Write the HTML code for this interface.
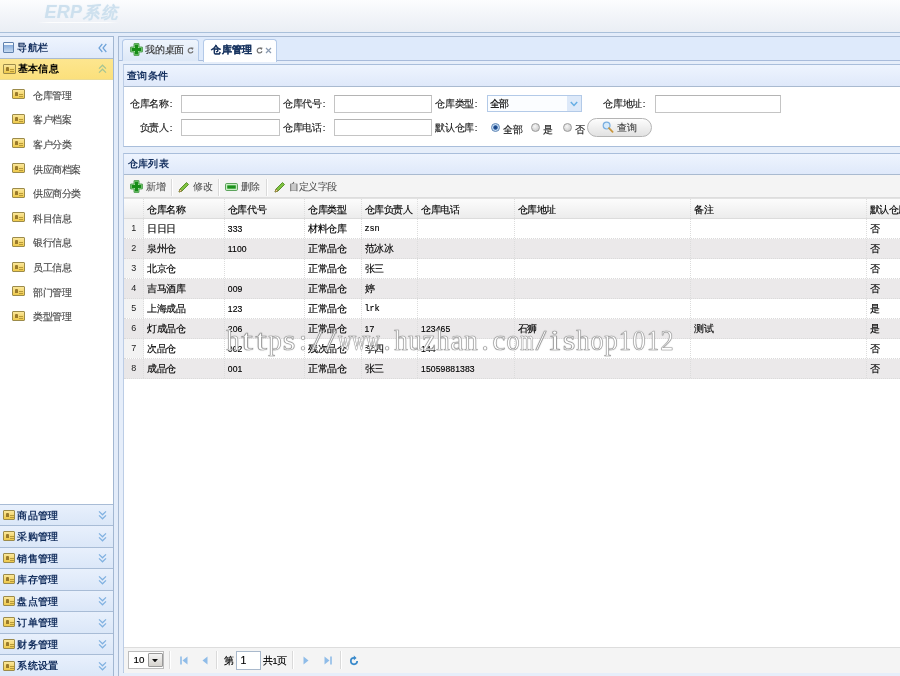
<!DOCTYPE html>
<html>
<head>
<meta charset="utf-8">
<title>ERP系统</title>
<style>
*{box-sizing:border-box;margin:0;padding:0}
html,body{width:900px;height:676px;overflow:hidden}
body{position:relative;background:#e3ecfa;font-family:"Liberation Sans",sans-serif;font-size:9.6px;letter-spacing:-.4px;color:#000;-webkit-text-stroke:.15px currentColor}
div,span,svg{position:absolute}
.nw{white-space:nowrap}
#north{left:0;top:0;width:900px;height:33px;background:linear-gradient(#fcfdfe 0,#f4f6fa 40%,#eaeef4 100%);border-bottom:1px solid #a9c0da}
#logo{-webkit-text-stroke:0;left:44.6px;top:-.6px;letter-spacing:.2px;font-size:18px;font-weight:bold;font-style:italic;color:#cde0ee;line-height:26px;text-shadow:0 0 1.5px #e3eef6}
#west{left:-1px;width:115px;height:641px;background:#fff;border:1px solid #a2b7d2}
.ph{-webkit-text-stroke:0;left:0;right:0;height:20.5px;background:linear-gradient(#eef4fe 0,#dfe9fa 100%);border-bottom:1px solid #a9bad0;font-weight:bold;color:#15305f;font-size:10px;letter-spacing:.3px;line-height:19.5px}
.acc{-webkit-text-stroke:0;left:0;width:113px;height:21.6px;background:linear-gradient(#e8f0fc 0,#dbe7f8 100%);border-top:1px solid #a8bcd6;font-weight:bold;color:#15305f;font-size:10px;letter-spacing:.3px;line-height:21px}
.t{left:17.3px;top:0}
.ico{left:3.2px;top:5.2px;width:12.3px;height:10px;background:linear-gradient(#fbe79a,#eec94b);border:1px solid #9c8b4a;border-radius:1px}
.ico:before{content:"";position:absolute;left:2px;top:2px;width:3px;height:4px;background:#9a7a2a;border-radius:1px 1px 0 0}
.ico:after{content:"";position:absolute;left:6px;top:4px;width:3.5px;height:1px;background:#b89a3a;box-shadow:0 2px 0 #b89a3a}
.item{left:0;width:113px;height:24.6px;line-height:24.6px;color:#4a4a4a}
.item .ico{left:12.4px;top:6.5px}
.item .tx{left:33px;top:1px}
#center{left:118px;top:36.4px;width:790px;height:641px;background:#deeafb;border:1px solid #a7b9d2}
.tab{top:39px;height:22px;border:1px solid #b3c9e8;border-bottom:none;border-radius:3.5px 3.5px 0 0;background:linear-gradient(#eff5fd,#dde8f7);line-height:20px;color:#333}
.panel{border:1px solid #a9bedb;border-left-color:#bccde6;background:#fff}
.lbl{line-height:17px;height:17px;color:#1a1a1a}
.inp{height:17.5px;background:#fff;border:1px solid #c4c4c4;border-top-color:#b4b4b4}
.radio{width:9.2px;height:9.2px;border-radius:50%;border:1px solid #9b9b9b;background:radial-gradient(circle at 40% 35%,#f6f6f6 0,#dedede 45%,#bfbfbf 100%)}
.row{left:0;width:790px;height:20px;border-bottom:1px dotted #dadada;line-height:19px}
.alt{background:#ebe9ea}
.row span{top:0.5px}
.hrow{left:0;width:790px;height:20.3px;background:linear-gradient(#fcfcfc,#ececec);border-top:1px solid #e2e2e2;border-bottom:1px solid #dcdcdc;line-height:19px}
.hrow span{top:0.3px}
.vl{top:0;width:0;border-left:1px dotted #dcdcdc}
.sep{width:2px;border-left:1px solid #dadada;border-right:1px solid #fff}
.tbt{line-height:16px;color:#505050;-webkit-text-stroke:.05px currentColor}
.wm{display:flex;width:448px;height:38px;font-family:"Liberation Serif",serif;font-size:29px;line-height:38px;letter-spacing:0;color:#fff;-webkit-text-stroke:.7px #9c9c9c;text-shadow:0 0 1.5px #b0b0b0}
.wm b{position:static;display:block;width:14px;flex:0 0 14px;text-align:center;font-weight:normal;overflow:visible;white-space:nowrap;display:flex;justify-content:center}
i.c{display:inline-block;width:4.8px;text-align:center;font-style:normal;letter-spacing:0}
</style>
</head>
<body>
<div id="wrap" style="left:0;top:0;width:900px;height:676px;will-change:transform;overflow:hidden">
<div id="north"><div id="logo" class="nw">ERP<i style="font-size:16.4px;letter-spacing:2.2px;margin-left:1px">系统</i></div><div style="left:37px;top:22.3px;width:82px;height:1px;background:linear-gradient(90deg,rgba(255,255,255,0),rgba(255,255,255,.9) 15%,rgba(255,255,255,.9) 85%,rgba(255,255,255,0))"></div></div>
<div id="west" style="top:36.2px">
<div class="ph nw" style="top:0;height:21.7px;line-height:20.4px"><div style="left:3.4px;top:5px;width:10.6px;height:10.8px;border:1px solid #5f80ad;border-radius:1px;background:linear-gradient(#f3f7fc 0,#f3f7fc 22%,#86abdb 23%,#c6daf1 100%)"></div><span class="t" style="top:.9px">导航栏</span><svg style="right:6px;top:6px" width="9" height="10" viewBox="0 0 9 10"><path d="M4.3 1 L1 5 L4.3 9 M8.3 1 L5 5 L8.3 9" fill="none" stroke="#6fa3d9" stroke-width="1.2"/></svg></div>
<div class="acc nw" style="top:21.7px;height:21.0px;background:linear-gradient(#fde68f,#fbe07c);border-top:none;border-bottom:1px solid #ebdc96;color:#000;line-height:20.4px"><div class="ico" style="left:3.4px;top:5.2px"></div><span class="t" style="left:17.7px;top:.6px">基本信息</span><svg style="right:6.5px;top:5.5px" width="9" height="10" viewBox="0 0 9 10"><path d="M1 4.6 L4.5 1.2 L8 4.6 M1 8.6 L4.5 5.2 L8 8.6" fill="none" stroke="#a5c493" stroke-width="1.2"/></svg></div>
<div class="item nw" style="top:45.50px"><div class="ico"></div><span class="tx">仓库管理</span></div>
<div class="item nw" style="top:70.12px"><div class="ico"></div><span class="tx">客户档案</span></div>
<div class="item nw" style="top:94.74px"><div class="ico"></div><span class="tx">客户分类</span></div>
<div class="item nw" style="top:119.36px"><div class="ico"></div><span class="tx">供应商档案</span></div>
<div class="item nw" style="top:143.98px"><div class="ico"></div><span class="tx">供应商分类</span></div>
<div class="item nw" style="top:168.60px"><div class="ico"></div><span class="tx">科目信息</span></div>
<div class="item nw" style="top:193.22px"><div class="ico"></div><span class="tx">银行信息</span></div>
<div class="item nw" style="top:217.84px"><div class="ico"></div><span class="tx">员工信息</span></div>
<div class="item nw" style="top:242.46px"><div class="ico"></div><span class="tx">部门管理</span></div>
<div class="item nw" style="top:267.08px"><div class="ico"></div><span class="tx">类型管理</span></div>
<div class="acc nw" style="top:466.40px"><div class="ico"></div><span class="t">商品管理</span><svg style="right:6.5px;top:5.5px" width="9" height="10" viewBox="0 0 9 10"><path d="M1 1.4 L4.5 4.8 L8 1.4 M1 5.4 L4.5 8.8 L8 5.4" fill="none" stroke="#7fb0e0" stroke-width="1.2"/></svg></div>
<div class="acc nw" style="top:487.94px"><div class="ico"></div><span class="t">采购管理</span><svg style="right:6.5px;top:5.5px" width="9" height="10" viewBox="0 0 9 10"><path d="M1 1.4 L4.5 4.8 L8 1.4 M1 5.4 L4.5 8.8 L8 5.4" fill="none" stroke="#7fb0e0" stroke-width="1.2"/></svg></div>
<div class="acc nw" style="top:509.48px"><div class="ico"></div><span class="t">销售管理</span><svg style="right:6.5px;top:5.5px" width="9" height="10" viewBox="0 0 9 10"><path d="M1 1.4 L4.5 4.8 L8 1.4 M1 5.4 L4.5 8.8 L8 5.4" fill="none" stroke="#7fb0e0" stroke-width="1.2"/></svg></div>
<div class="acc nw" style="top:531.02px"><div class="ico"></div><span class="t">库存管理</span><svg style="right:6.5px;top:5.5px" width="9" height="10" viewBox="0 0 9 10"><path d="M1 1.4 L4.5 4.8 L8 1.4 M1 5.4 L4.5 8.8 L8 5.4" fill="none" stroke="#7fb0e0" stroke-width="1.2"/></svg></div>
<div class="acc nw" style="top:552.56px"><div class="ico"></div><span class="t">盘点管理</span><svg style="right:6.5px;top:5.5px" width="9" height="10" viewBox="0 0 9 10"><path d="M1 1.4 L4.5 4.8 L8 1.4 M1 5.4 L4.5 8.8 L8 5.4" fill="none" stroke="#7fb0e0" stroke-width="1.2"/></svg></div>
<div class="acc nw" style="top:574.10px"><div class="ico"></div><span class="t">订单管理</span><svg style="right:6.5px;top:5.5px" width="9" height="10" viewBox="0 0 9 10"><path d="M1 1.4 L4.5 4.8 L8 1.4 M1 5.4 L4.5 8.8 L8 5.4" fill="none" stroke="#7fb0e0" stroke-width="1.2"/></svg></div>
<div class="acc nw" style="top:595.64px"><div class="ico"></div><span class="t">财务管理</span><svg style="right:6.5px;top:5.5px" width="9" height="10" viewBox="0 0 9 10"><path d="M1 1.4 L4.5 4.8 L8 1.4 M1 5.4 L4.5 8.8 L8 5.4" fill="none" stroke="#7fb0e0" stroke-width="1.2"/></svg></div>
<div class="acc nw" style="top:617.18px"><div class="ico"></div><span class="t">系统设置</span><svg style="right:6.5px;top:5.5px" width="9" height="10" viewBox="0 0 9 10"><path d="M1 1.4 L4.5 4.8 L8 1.4 M1 5.4 L4.5 8.8 L8 5.4" fill="none" stroke="#7fb0e0" stroke-width="1.2"/></svg></div>
</div>
<div id="center"></div>
<div style="left:119px;top:60px;width:781px;height:1px;background:#a9bcdb"></div>
<div style="left:119px;top:61px;width:781px;height:616px;background:#e6eefa"></div>
<div class="tab nw" style="left:122.2px;width:76.9px"><svg style="left:6.6px;top:2.6px" width="13" height="13" viewBox="0 0 13 13"><path d="M4.1 .7 h4.8 v3.4 h3.4 v4.8 h-3.4 v3.4 h-4.8 v-3.4 h-3.4 v-4.8 h3.4 z" fill="#bff0b8" stroke="#3c963c" stroke-width="1" stroke-linejoin="round"/><path d="M4.9 1.6 h3.2 v3.3 h3.3 v3.2 h-3.3 v3.3 h-3.2 v-3.3 h-3.3 v-3.2 h3.3 z" fill="#168c16"/></svg><span style="left:22.3px;top:0">我的桌面</span><svg style="left:63.5px;top:7px" width="7" height="7" viewBox="0 0 7 7"><path d="M5.6 2.2 A2.4 2.4 0 1 0 5.9 4.2" fill="none" stroke="#747474" stroke-width="1.25"/><path d="M4 0.3 L6.6 0.8 L5.6 3 z" fill="#747474"/></svg></div>
<div class="tab nw" style="left:203px;width:74px;height:23px;background:linear-gradient(#fdfeff,#fff);color:#17335f;font-weight:bold;font-size:10px;letter-spacing:.3px"><span style="left:7.3px;top:0">仓库管理</span><svg style="left:51.5px;top:7px" width="7" height="7" viewBox="0 0 7 7"><path d="M5.6 2.2 A2.4 2.4 0 1 0 5.9 4.2" fill="none" stroke="#747474" stroke-width="1.25"/><path d="M4 0.3 L6.6 0.8 L5.6 3 z" fill="#747474"/></svg><svg style="left:60.6px;top:7px" width="7" height="7" viewBox="0 0 7 7"><path d="M1 1 L6 6 M6 1 L1 6" stroke="#8a9ab0" stroke-width="1.2"/></svg></div>
<div class="panel" style="left:123px;top:63.8px;width:790px;height:83.7px"></div>
<div class="ph nw" style="left:124px;top:64.8px;width:788px;height:22px;right:auto"><span style="left:3.2px;top:1.5px">查询条件</span></div>
<div class="lbl nw" style="left:124.4px;top:95.2px;width:49.0px;text-align:right"><span style="right:0;top:0">仓库名称<i class="c">:</i></span></div>
<div class="inp" style="left:181px;top:95px;width:98.5px"></div>
<div class="lbl nw" style="left:277.4px;top:95.2px;width:49.0px;text-align:right"><span style="right:0;top:0">仓库代号<i class="c">:</i></span></div>
<div class="inp" style="left:333.5px;top:95px;width:98.5px"></div>
<div class="lbl nw" style="left:429.6px;top:95.2px;width:49.0px;text-align:right"><span style="right:0;top:0">仓库类型<i class="c">:</i></span></div>
<div class="inp" style="left:486.5px;top:95px;width:95.5px;height:17px;border-color:#b3cae8;background:#fbfdff"><span class="nw" style="left:2px;top:0;line-height:16px">全部</span><div style="right:0;top:0;width:14px;height:15px;background:#dde9f9"></div><svg style="right:3px;top:4.6px" width="8" height="6" viewBox="0 0 8 6"><path d="M0.8 1 L4 4.4 L7.2 1" fill="none" stroke="#66aee4" stroke-width="1.5"/></svg></div>
<div class="lbl nw" style="left:597.6px;top:95.2px;width:49.0px;text-align:right"><span style="right:0;top:0">仓库地址<i class="c">:</i></span></div>
<div class="inp" style="left:655px;top:95px;width:126px"></div>
<div class="lbl nw" style="left:124.4px;top:119.0px;width:49.0px;text-align:right"><span style="right:0;top:0">负责人<i class="c">:</i></span></div>
<div class="inp" style="left:181px;top:118.8px;width:98.5px"></div>
<div class="lbl nw" style="left:277.4px;top:119.0px;width:49.0px;text-align:right"><span style="right:0;top:0">仓库电话<i class="c">:</i></span></div>
<div class="inp" style="left:333.5px;top:118.8px;width:98.5px"></div>
<div class="lbl nw" style="left:429.6px;top:119.0px;width:49.0px;text-align:right"><span style="right:0;top:0">默认仓库<i class="c">:</i></span></div>
<div class="radio" style="left:491.3px;top:122.8px;border-color:#5c84b4;background:radial-gradient(circle at 50% 50%,#173f7c 0,#24559a 36%,#bcd6f0 52%,#e6f0fb 100%)"></div>
<div class="lbl nw" style="left:503.2px;top:121.2px">全部</div>
<div class="radio" style="left:531.2px;top:122.8px"></div>
<div class="lbl nw" style="left:543.0px;top:121.2px">是</div>
<div class="radio" style="left:563.3px;top:122.8px"></div>
<div class="lbl nw" style="left:575.2px;top:121.2px">否</div>
<div style="left:587.2px;top:117.8px;width:64.8px;height:19.2px;border:1px solid #b4b4b4;border-radius:9.5px;background:linear-gradient(#fdfdfd 0,#efefef 50%,#e2e2e2 100%)"><svg style="left:13.6px;top:2.2px" width="12" height="12" viewBox="0 0 12 12"><circle cx="4.6" cy="4.6" r="3.4" fill="#d6eafa" stroke="#79aee0" stroke-width="1.2"/><path d="M7 7.2 L10.6 10.8" stroke="#c9963c" stroke-width="1.8" stroke-linecap="round"/></svg><span class="nw" style="left:29.2px;top:0;line-height:17px;color:#444">查询</span></div>
<div class="panel" style="left:123px;top:152.5px;width:790px;height:520.5px"></div>
<div class="ph nw" style="left:124px;top:153.5px;width:788px;height:21.3px;right:auto"><span style="left:3.8px;top:.5px">仓库列表</span></div>
<div style="left:124px;top:174.8px;width:788px;height:23.7px;background:#f4f4f4;border-bottom:1px solid #dddddd"></div>
<svg style="left:130px;top:179.8px" width="13" height="13" viewBox="0 0 13 13"><path d="M4.1 .7 h4.8 v3.4 h3.4 v4.8 h-3.4 v3.4 h-4.8 v-3.4 h-3.4 v-4.8 h3.4 z" fill="#bff0b8" stroke="#3c963c" stroke-width="1" stroke-linejoin="round"/><path d="M4.9 1.6 h3.2 v3.3 h3.3 v3.2 h-3.3 v3.3 h-3.2 v-3.3 h-3.3 v-3.2 h3.3 z" fill="#168c16"/></svg>
<div class="tbt nw" style="left:146.3px;top:178.8px">新增</div>
<div class="sep" style="left:171px;top:178.5px;height:17px"></div>
<svg style="left:178.3px;top:180.5px" width="12" height="12" viewBox="0 0 12 12"><path d="M1 11 L2 8 L8.5 1.5 L10.5 3.5 L4 10 z" fill="#7fc241" stroke="#4f8a22" stroke-width=".9" stroke-linejoin="round"/><path d="M1 11 L2 8 L4 10 z" fill="#f0d9a0" stroke="#8a6a2a" stroke-width=".6"/></svg>
<div class="tbt nw" style="left:193px;top:178.8px">修改</div>
<div class="sep" style="left:217.7px;top:178.5px;height:17px"></div>
<svg style="left:225px;top:182.5px" width="13" height="8" viewBox="0 0 13 8"><rect x=".6" y=".6" width="11.8" height="6.8" rx=".8" fill="#d9f7d4" stroke="#3a8f3a" stroke-width=".9"/><rect x="2.2" y="2.3" width="8.6" height="3.4" fill="#1c921c"/></svg>
<div class="tbt nw" style="left:240.7px;top:178.8px">删除</div>
<div class="sep" style="left:266px;top:178.5px;height:17px"></div>
<svg style="left:273.8px;top:180.5px" width="12" height="12" viewBox="0 0 12 12"><path d="M1 11 L2 8 L8.5 1.5 L10.5 3.5 L4 10 z" fill="#7fc241" stroke="#4f8a22" stroke-width=".9" stroke-linejoin="round"/><path d="M1 11 L2 8 L4 10 z" fill="#f0d9a0" stroke="#8a6a2a" stroke-width=".6"/></svg>
<div class="tbt nw" style="left:289px;top:178.8px">自定义字段</div>
<div style="left:124px;top:198.3px;width:788px;height:448px;overflow:hidden">
<div class="hrow nw">
<span style="left:23.3px">仓库名称</span>
<span style="left:103.8px">仓库代号</span>
<span style="left:184.0px">仓库类型</span>
<span style="left:240.5px">仓库负责人</span>
<span style="left:297.0px">仓库电话</span>
<span style="left:393.7px">仓库地址</span>
<span style="left:570.1px">备注</span>
<span style="left:745.5px">默认仓库</span>
<div class="vl" style="left:19.2px;height:19px;border-left-color:#dedede"></div>
<div class="vl" style="left:100.2px;height:19px;border-left-color:#dedede"></div>
<div class="vl" style="left:180.2px;height:19px;border-left-color:#dedede"></div>
<div class="vl" style="left:236.8px;height:19px;border-left-color:#dedede"></div>
<div class="vl" style="left:292.8px;height:19px;border-left-color:#dedede"></div>
<div class="vl" style="left:389.8px;height:19px;border-left-color:#dedede"></div>
<div class="vl" style="left:565.8px;height:19px;border-left-color:#dedede"></div>
<div class="vl" style="left:741.6px;height:19px;border-left-color:#dedede"></div>
</div>
<div class="row nw" style="top:20.3px">
<div style="left:0;top:0;width:19.5px;height:19px;background:#f3f3f3"></div>
<span style="left:7.2px;font-size:9px;color:#222;-webkit-text-stroke:0">1</span>
<span style="left:23.3px">日日日</span>
<span style="left:103.8px;top:1.3px;font-size:8.6px;letter-spacing:.1px">333</span>
<span style="left:184.0px">材料仓库</span>
<span style="left:240.5px;top:1.8px;font-size:8.6px;font-family:'Liberation Mono',monospace;letter-spacing:-.2px">zsn</span>
<span style="left:745.5px">否</span>
<div class="vl" style="left:19.2px;height:19px"></div>
<div class="vl" style="left:100.2px;height:19px"></div>
<div class="vl" style="left:180.2px;height:19px"></div>
<div class="vl" style="left:236.8px;height:19px"></div>
<div class="vl" style="left:292.8px;height:19px"></div>
<div class="vl" style="left:389.8px;height:19px"></div>
<div class="vl" style="left:565.8px;height:19px"></div>
<div class="vl" style="left:741.6px;height:19px"></div>
</div>
<div class="row nw alt" style="top:40.3px">
<div style="left:0;top:0;width:19.5px;height:19px;background:#e9e7e8"></div>
<span style="left:7.2px;font-size:9px;color:#222;-webkit-text-stroke:0">2</span>
<span style="left:23.3px">泉州仓</span>
<span style="left:103.8px;top:1.3px;font-size:8.6px;letter-spacing:.1px">1100</span>
<span style="left:184.0px">正常品仓</span>
<span style="left:240.5px">范冰冰</span>
<span style="left:745.5px">否</span>
<div class="vl" style="left:19.2px;height:19px"></div>
<div class="vl" style="left:100.2px;height:19px"></div>
<div class="vl" style="left:180.2px;height:19px"></div>
<div class="vl" style="left:236.8px;height:19px"></div>
<div class="vl" style="left:292.8px;height:19px"></div>
<div class="vl" style="left:389.8px;height:19px"></div>
<div class="vl" style="left:565.8px;height:19px"></div>
<div class="vl" style="left:741.6px;height:19px"></div>
</div>
<div class="row nw" style="top:60.3px">
<div style="left:0;top:0;width:19.5px;height:19px;background:#f3f3f3"></div>
<span style="left:7.2px;font-size:9px;color:#222;-webkit-text-stroke:0">3</span>
<span style="left:23.3px">北京仓</span>
<span style="left:184.0px">正常品仓</span>
<span style="left:240.5px">张三</span>
<span style="left:745.5px">否</span>
<div class="vl" style="left:19.2px;height:19px"></div>
<div class="vl" style="left:100.2px;height:19px"></div>
<div class="vl" style="left:180.2px;height:19px"></div>
<div class="vl" style="left:236.8px;height:19px"></div>
<div class="vl" style="left:292.8px;height:19px"></div>
<div class="vl" style="left:389.8px;height:19px"></div>
<div class="vl" style="left:565.8px;height:19px"></div>
<div class="vl" style="left:741.6px;height:19px"></div>
</div>
<div class="row nw alt" style="top:80.3px">
<div style="left:0;top:0;width:19.5px;height:19px;background:#e9e7e8"></div>
<span style="left:7.2px;font-size:9px;color:#222;-webkit-text-stroke:0">4</span>
<span style="left:23.3px">吉马酒库</span>
<span style="left:103.8px;top:1.3px;font-size:8.6px;letter-spacing:.1px">009</span>
<span style="left:184.0px">正常品仓</span>
<span style="left:240.5px">婷</span>
<span style="left:745.5px">否</span>
<div class="vl" style="left:19.2px;height:19px"></div>
<div class="vl" style="left:100.2px;height:19px"></div>
<div class="vl" style="left:180.2px;height:19px"></div>
<div class="vl" style="left:236.8px;height:19px"></div>
<div class="vl" style="left:292.8px;height:19px"></div>
<div class="vl" style="left:389.8px;height:19px"></div>
<div class="vl" style="left:565.8px;height:19px"></div>
<div class="vl" style="left:741.6px;height:19px"></div>
</div>
<div class="row nw" style="top:100.3px">
<div style="left:0;top:0;width:19.5px;height:19px;background:#f3f3f3"></div>
<span style="left:7.2px;font-size:9px;color:#222;-webkit-text-stroke:0">5</span>
<span style="left:23.3px">上海成品</span>
<span style="left:103.8px;top:1.3px;font-size:8.6px;letter-spacing:.1px">123</span>
<span style="left:184.0px">正常品仓</span>
<span style="left:240.5px;top:1.8px;font-size:8.6px;font-family:'Liberation Mono',monospace;letter-spacing:-.2px">lrk</span>
<span style="left:745.5px">是</span>
<div class="vl" style="left:19.2px;height:19px"></div>
<div class="vl" style="left:100.2px;height:19px"></div>
<div class="vl" style="left:180.2px;height:19px"></div>
<div class="vl" style="left:236.8px;height:19px"></div>
<div class="vl" style="left:292.8px;height:19px"></div>
<div class="vl" style="left:389.8px;height:19px"></div>
<div class="vl" style="left:565.8px;height:19px"></div>
<div class="vl" style="left:741.6px;height:19px"></div>
</div>
<div class="row nw alt" style="top:120.3px">
<div style="left:0;top:0;width:19.5px;height:19px;background:#e9e7e8"></div>
<span style="left:7.2px;font-size:9px;color:#222;-webkit-text-stroke:0">6</span>
<span style="left:23.3px">灯成品仓</span>
<span style="left:103.8px;top:1.3px;font-size:8.6px;letter-spacing:.1px">206</span>
<span style="left:184.0px">正常品仓</span>
<span style="left:240.5px;top:1.3px;font-size:8.6px;letter-spacing:.1px">17</span>
<span style="left:297.0px;top:1.3px;font-size:8.6px;letter-spacing:.1px">123465</span>
<span style="left:393.7px">石狮</span>
<span style="left:570.1px">测试</span>
<span style="left:745.5px">是</span>
<div class="vl" style="left:19.2px;height:19px"></div>
<div class="vl" style="left:100.2px;height:19px"></div>
<div class="vl" style="left:180.2px;height:19px"></div>
<div class="vl" style="left:236.8px;height:19px"></div>
<div class="vl" style="left:292.8px;height:19px"></div>
<div class="vl" style="left:389.8px;height:19px"></div>
<div class="vl" style="left:565.8px;height:19px"></div>
<div class="vl" style="left:741.6px;height:19px"></div>
</div>
<div class="row nw" style="top:140.3px">
<div style="left:0;top:0;width:19.5px;height:19px;background:#f3f3f3"></div>
<span style="left:7.2px;font-size:9px;color:#222;-webkit-text-stroke:0">7</span>
<span style="left:23.3px">次品仓</span>
<span style="left:103.8px;top:1.3px;font-size:8.6px;letter-spacing:.1px">002</span>
<span style="left:184.0px">残次品仓</span>
<span style="left:240.5px">李四</span>
<span style="left:297.0px;top:1.3px;font-size:8.6px;letter-spacing:.1px">144</span>
<span style="left:745.5px">否</span>
<div class="vl" style="left:19.2px;height:19px"></div>
<div class="vl" style="left:100.2px;height:19px"></div>
<div class="vl" style="left:180.2px;height:19px"></div>
<div class="vl" style="left:236.8px;height:19px"></div>
<div class="vl" style="left:292.8px;height:19px"></div>
<div class="vl" style="left:389.8px;height:19px"></div>
<div class="vl" style="left:565.8px;height:19px"></div>
<div class="vl" style="left:741.6px;height:19px"></div>
</div>
<div class="row nw alt" style="top:160.3px">
<div style="left:0;top:0;width:19.5px;height:19px;background:#e9e7e8"></div>
<span style="left:7.2px;font-size:9px;color:#222;-webkit-text-stroke:0">8</span>
<span style="left:23.3px">成品仓</span>
<span style="left:103.8px;top:1.3px;font-size:8.6px;letter-spacing:.1px">001</span>
<span style="left:184.0px">正常品仓</span>
<span style="left:240.5px">张三</span>
<span style="left:297.0px;top:1.3px;font-size:8.6px;letter-spacing:.1px">15059881383</span>
<span style="left:745.5px">否</span>
<div class="vl" style="left:19.2px;height:19px"></div>
<div class="vl" style="left:100.2px;height:19px"></div>
<div class="vl" style="left:180.2px;height:19px"></div>
<div class="vl" style="left:236.8px;height:19px"></div>
<div class="vl" style="left:292.8px;height:19px"></div>
<div class="vl" style="left:389.8px;height:19px"></div>
<div class="vl" style="left:565.8px;height:19px"></div>
<div class="vl" style="left:741.6px;height:19px"></div>
</div>
</div>
<div style="left:124px;top:646.5px;width:788px;height:26px;background:#f4f4f4;border-top:1px solid #dddddd"></div>
<div style="left:128px;top:651px;width:36px;height:18px;background:#fff;border:1px solid #bcbcbc"><span class="nw" style="left:4.5px;top:0;line-height:16px;font-size:9.8px;letter-spacing:0">10</span><div style="right:.5px;top:1px;width:14.5px;height:14px;border:1px solid #9a9a9a;border-radius:1px;background:linear-gradient(#f4f4f4,#d6d3ce)"><svg style="left:3.2px;top:4.5px" width="6" height="3.4" viewBox="0 0 7 4"><path d="M0 0 L7 0 L3.5 4 z" fill="#111"/></svg></div></div>
<div class="sep" style="left:169.3px;top:651px;height:18px"></div>
<svg style="left:179.5px;top:655.5px" width="8" height="9" viewBox="0 0 8 9"><path d="M1 .5 V8.5" stroke="#8fbce8" stroke-width="1.6"/><path d="M7.5 .5 L2.5 4.5 L7.5 8.5 z" fill="#8fbce8"/></svg>
<svg style="left:202px;top:655.5px" width="6" height="9" viewBox="0 0 6 9"><path d="M5.5 .5 L.5 4.5 L5.5 8.5 z" fill="#8fbce8"/></svg>
<div class="sep" style="left:215.8px;top:651px;height:18px"></div>
<div class="nw" style="left:223.5px;top:652px;line-height:17px">第</div>
<div class="inp" style="left:236px;top:651px;width:25px;height:18.5px;border-color:#a9b9cc"><span class="nw" style="left:3.5px;top:0;line-height:16px;font-size:10.5px">1</span></div>
<div class="nw" style="left:263px;top:652px;line-height:17px">共<i class="c" style="font-size:9px">1</i>页</div>
<div class="sep" style="left:291.6px;top:651px;height:18px"></div>
<svg style="left:302.5px;top:655.5px" width="6" height="9" viewBox="0 0 6 9"><path d="M.5 .5 L5.5 4.5 L.5 8.5 z" fill="#8fbce8"/></svg>
<svg style="left:324px;top:655.5px" width="8" height="9" viewBox="0 0 8 9"><path d="M7 .5 V8.5" stroke="#8fbce8" stroke-width="1.6"/><path d="M.5 .5 L5.5 4.5 L.5 8.5 z" fill="#8fbce8"/></svg>
<div class="sep" style="left:339.6px;top:651px;height:18px"></div>
<svg style="left:348.5px;top:654.5px" width="10" height="11" viewBox="0 0 10 11"><path d="M5 2.9 A3.2 3.2 0 1 0 8.2 6.1" fill="none" stroke="#3a8acb" stroke-width="1.7"/><path d="M4.8 .6 L7.6 2.9 L4.8 5.2 z" fill="#3a8acb"/></svg>
<div class="nw wm" style="left:226px;top:321px"><b style="transform:scaleX(0.93);">h</b><b style="transform:scaleX(1.45);">t</b><b style="transform:scaleX(1.45);">t</b><b style="transform:scaleX(0.93);">p</b><b style="transform:scaleX(1.12);">s</b><b style="">:</b><b style="transform:scaleX(1.3);">/</b><b style="transform:scaleX(1.3);">/</b><b style="transform:scaleX(0.66);">w</b><b style="transform:scaleX(0.66);">w</b><b style="transform:scaleX(0.66);">w</b><b style="">.</b><b style="transform:scaleX(0.93);">h</b><b style="transform:scaleX(0.93);">u</b><b style="">z</b><b style="transform:scaleX(0.93);">h</b><b style="">a</b><b style="transform:scaleX(0.93);">n</b><b style="">.</b><b style="">c</b><b style="transform:scaleX(0.9);">o</b><b style="transform:scaleX(0.6);">m</b><b style="transform:scaleX(1.3);">/</b><b style="transform:scaleX(1.35);">i</b><b style="transform:scaleX(1.12);">s</b><b style="transform:scaleX(0.93);">h</b><b style="transform:scaleX(0.9);">o</b><b style="transform:scaleX(0.93);">p</b><b style="transform:scaleX(0.85);">1</b><b style="transform:scaleX(0.9);">0</b><b style="transform:scaleX(0.85);">1</b><b style="transform:scaleX(0.9);">2</b></div>
</div>
</body>
</html>
